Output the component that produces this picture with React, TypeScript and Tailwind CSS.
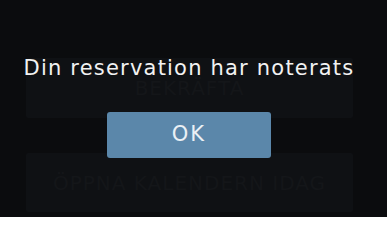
import React from "react";

export default function App() {
  return (
    <div
      className="relative w-[387px] h-[217px] overflow-hidden bg-[#0b0c0e]"
      style={{ fontFamily: '"DejaVu Sans", "Open Sans", sans-serif' }}
    >
      {/* underlying dimmed page */}
      <div className="flex flex-col gap-[35px] pl-[26px] pr-[34px] pt-[58px]">
        <div className="h-[60px] rounded-[2px] bg-[#0f1114] flex items-center justify-center text-[#141619] text-[20px] tracking-[1px]">
          BEKRÄFTA
        </div>
        <div className="h-[59px] rounded-[2px] bg-[#0f1114] flex items-center justify-center text-[#141619] text-[20px] tracking-[1px]">
          ÖPPNA KALENDERN IDAG
        </div>
      </div>

      {/* dialog overlay */}
      <div className="absolute inset-0 flex flex-col items-center pt-[55px] pl-[0px] pr-[9px]">
        <div className="text-[#f2f2f2] text-[21px] leading-[26px] tracking-[1.2px] whitespace-nowrap">
          Din reservation har noterats
        </div>
        <button className="mt-[31px] w-[164px] h-[46px] rounded-[3px] bg-[#5b87aa] text-[#eaf0f5] text-[21px] tracking-[2px] flex items-center justify-center">
          OK
        </button>
      </div>
    </div>
  );
}
